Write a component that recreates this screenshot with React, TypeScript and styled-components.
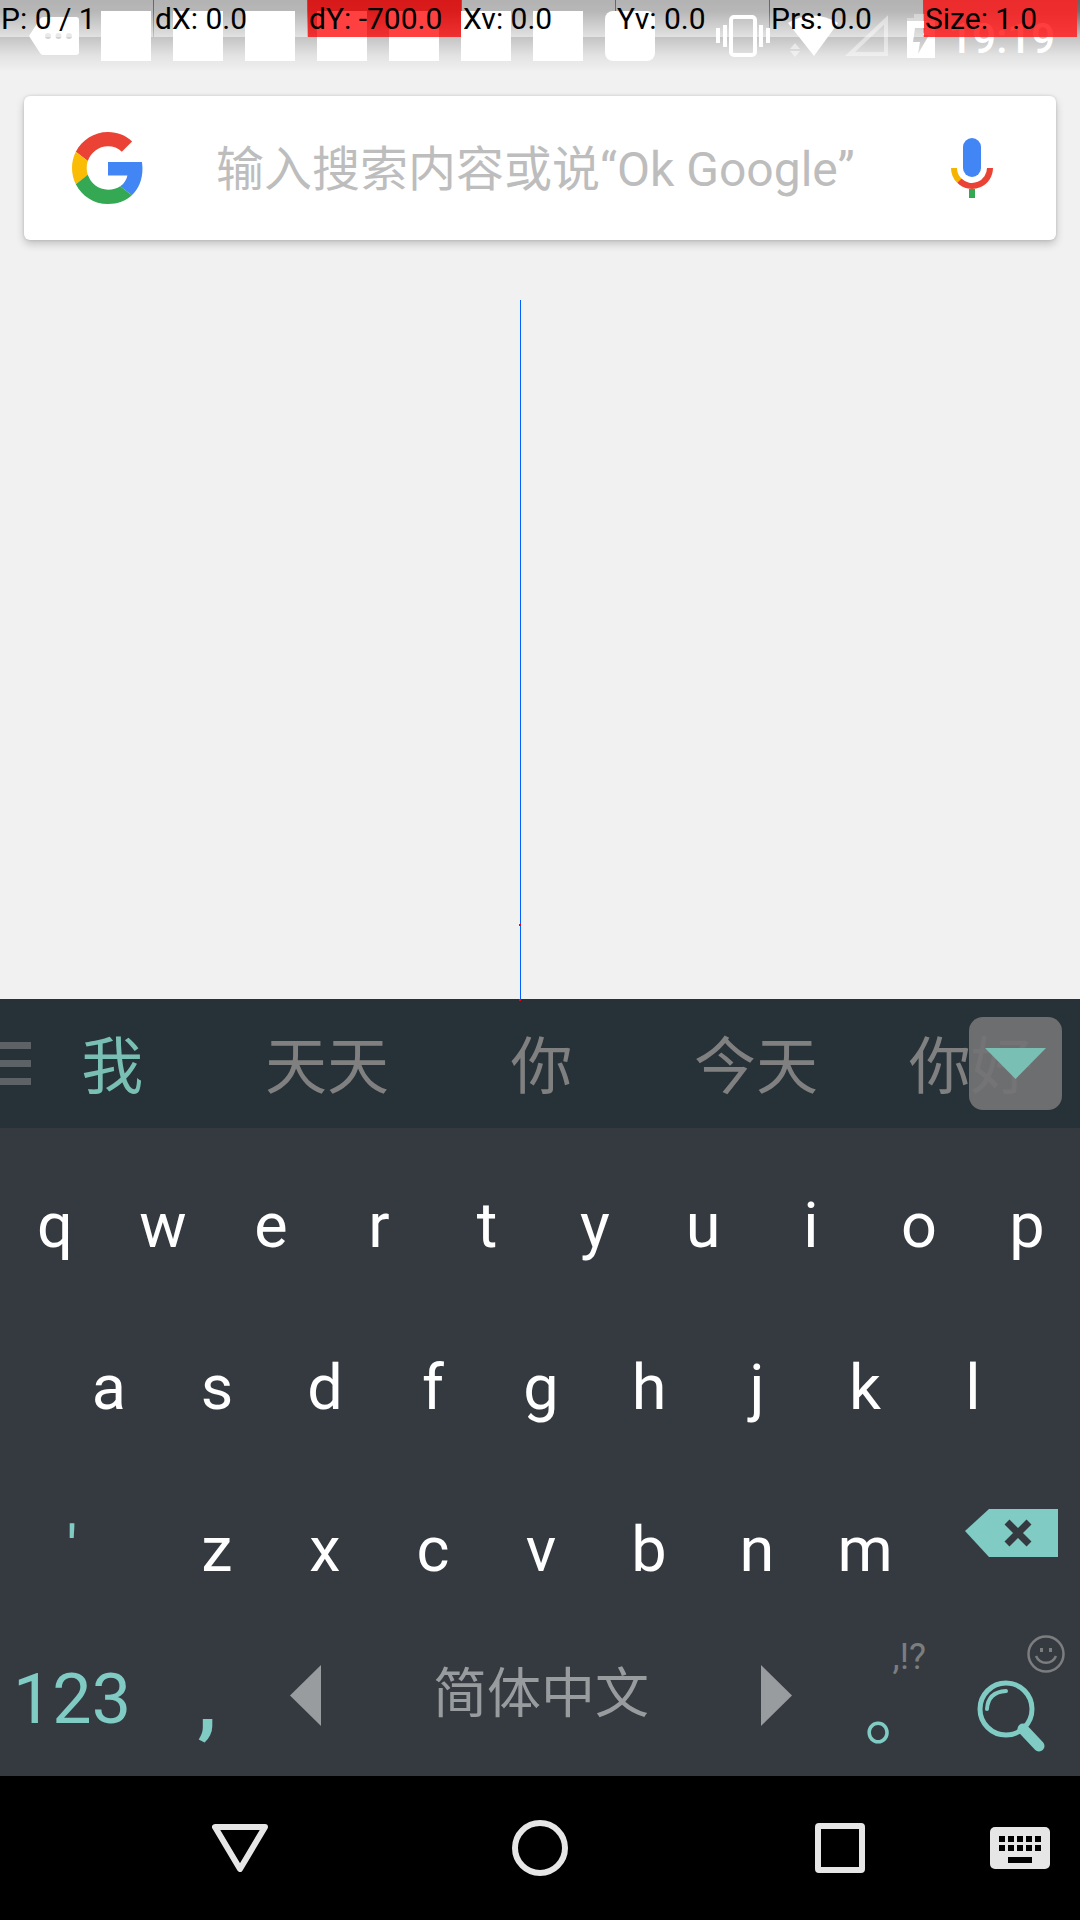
import React from "react";
import styled, { createGlobalStyle } from "styled-components";

const GlobalStyle = createGlobalStyle`
  * { box-sizing: border-box; }
  body { margin: 0; background: #f1f1f1; }
  button, input { font: inherit; color: inherit; border: 0; background: none; padding: 0; margin: 0; outline: none; }
  svg { display: block; }
`;

const Screen = styled.div`
  display: flex;
  flex-direction: column;
  min-height: 100vh;
  overflow: hidden;
  font-family: Roboto, "Noto Sans CJK SC", sans-serif;
`;

const Content = styled.main`
  position: relative;
  flex: 1;
  background: #f1f1f1;
`;

/* ---------- status bar ---------- */

const StatusBar = styled.header`
  position: relative;
  display: flex;
  align-items: center;
  justify-content: space-between;
  height: 72px;
  padding: 0 25px 0 29px;
  background: linear-gradient(
    rgba(0, 0, 0, 0.58) 0,
    rgba(0, 0, 0, 0.54) 11px,
    rgba(0, 0, 0, 0.19) 37px,
    rgba(0, 0, 0, 0.06) 56px,
    rgba(0, 0, 0, 0) 72px
  );
`;

const StatusGroup = styled.div<{ $gap: number }>`
  display: flex;
  align-items: center;
  gap: ${(p) => p.$gap}px;
`;

const Notification = styled.span<{ $round?: boolean }>`
  width: 50px;
  height: 50px;
  border-radius: ${(p) => (p.$round ? 8 : 0)}px;
  background: #fff;
`;

const Clock = styled.time`
  padding-top: 6px;
  color: #fff;
  font-size: 42px;
  font-weight: 500;
  line-height: 50px;
`;

const PointerReadout = styled.div`
  position: absolute;
  inset: 0 0 auto 0;
  display: grid;
  grid-template-columns: repeat(7, 1fr);
  column-gap: 1px;
  padding-right: 3px;
  height: 37px;
`;

const tones = {
  plain: "rgba(255, 255, 255, 0.5)",
  alert: "rgba(255, 0, 0, 0.75)",
  strong: "rgba(255, 36, 36, 0.88)",
};

const Reading = styled.span<{ $tone: keyof typeof tones }>`
  padding-left: 1px;
  background: ${(p) => tones[p.$tone]};
  color: #000;
  font-size: 30px;
  line-height: 37px;
  white-space: nowrap;
`;

const PointerTrail = styled.div`
  position: absolute;
  z-index: 1;
  top: 300px;
  bottom: 0;
  left: 520px;
  width: 1px;
  background: #0060ff;
`;

const TrailPoint = styled.i<{ $up: number }>`
  position: absolute;
  left: -1px;
  bottom: ${(p) => p.$up}px;
  width: 2px;
  height: 2px;
  background: #f00;
`;

/* ---------- search ---------- */

const SearchCard = styled.form`
  display: flex;
  align-items: center;
  height: 144px;
  margin: 24px 24px 0;
  padding: 0 63px 0 48px;
  gap: 72px;
  border-radius: 6px;
  background: #fff;
  box-shadow: 0 4px 8px rgba(0, 0, 0, 0.2), 0 0 3px rgba(0, 0, 0, 0.14);
`;

const SearchInput = styled.input`
  flex: 1;
  min-width: 0;
  height: 72px;
  padding-top: 2px;
  font-size: 48px;
  color: #212121;
  &::placeholder { color: #bdbdbd; opacity: 1; }
`;

/* ---------- keyboard ---------- */

const Keyboard = styled.section`
  background: #343a40;
`;

const Candidates = styled.div`
  position: relative;
  display: grid;
  grid-template-columns: repeat(5, 1fr);
  height: 129px;
  padding: 0 2px 0 5px;
  background: #263238;
`;

const Candidate = styled.button<{ $active?: boolean }>`
  padding-top: 8px;
  color: ${(p) => (p.$active ? "#7abfb4" : "#808080")};
  font-size: 62px;
  line-height: 62px;
`;

const MenuButton = styled.button`
  position: absolute;
  left: 0;
  top: 43px;
  display: grid;
  gap: 11px;
  width: 31px;
`;

const MenuLine = styled.i`
  height: 7px;
  background: #5c6265;
`;

const ExpandButton = styled.button`
  position: absolute;
  top: 18px;
  right: 18px;
  display: grid;
  place-items: center;
  width: 93px;
  height: 93px;
  border-radius: 14px;
  background: rgba(115, 115, 117, 0.92);
`;

const KeyRow = styled.div<{ $columns: string; $inset?: string }>`
  display: grid;
  grid-template-columns: ${(p) => p.$columns};
  height: 162px;
  padding: ${(p) => p.$inset ?? "0"};
`;

const Key = styled.button<{ $drop?: number; $shift?: number }>`
  position: relative;
  display: flex;
  align-items: center;
  justify-content: center;
  padding-top: ${(p) => p.$drop ?? 0}px;
  padding-left: ${(p) => p.$shift ?? 0}px;
  color: #fff;
  font-size: 63px;
  line-height: 74px;
`;

const AccentKey = styled(Key)<{ $size?: number; $bold?: boolean }>`
  color: #80cbc4;
  font-size: ${(p) => p.$size ?? 70}px;
  font-weight: ${(p) => (p.$bold ? 700 : 400)};
`;

const SpaceKey = styled(Key)`
  justify-content: space-between;
  padding: 0 18px 0 20px;
  color: #999c9f;
  font-size: 54px;
`;

const KeyHint = styled.span<{ $top: number; $right: number }>`
  position: absolute;
  top: ${(p) => p.$top}px;
  right: ${(p) => p.$right}px;
  color: #7c7d7f;
  font-size: 36px;
  line-height: 36px;
`;

/* ---------- navigation ---------- */

const NavBar = styled.nav`
  display: grid;
  grid-template-columns: 90px repeat(3, 1fr) 90px;
  height: 144px;
  background: #000;
`;

const NavButton = styled.button<{ $column: number; $start?: boolean }>`
  grid-column: ${(p) => p.$column};
  display: grid;
  align-items: center;
  justify-items: ${(p) => (p.$start ? "start" : "center")};
`;

const readings: { text: string; tone: keyof typeof tones }[] = [
  { text: "P: 0 / 1", tone: "plain" },
  { text: "dX: 0.0", tone: "plain" },
  { text: "dY: -700.0", tone: "alert" },
  { text: "Xv: 0.0", tone: "plain" },
  { text: "Yv: 0.0", tone: "plain" },
  { text: "Prs: 0.0", tone: "plain" },
  { text: "Size: 1.0", tone: "strong" },
];

const candidates = ["我", "天天", "你", "今天", "你好"];

const MoreIcon = () => (
  <svg width="50" height="38" viewBox="0 0 50 38">
    <path fill="#fff" d="M15 0h32q3 0 3 3v32q0 3-3 3H14q-2 0-3-2L0 19 11 2q1-2 4-2z" />
    <g fill="#d2d2d2">
      <circle cx="19" cy="19" r="3" />
      <circle cx="29.500" cy="19" r="3" />
      <circle cx="40" cy="19" r="3" />
    </g>
  </svg>
);

const VibrateIcon = () => (
  <svg width="54" height="42" viewBox="0 0 54 42">
    <rect x="15" y="2" width="24" height="38" rx="3" fill="none" stroke="#fff" strokeWidth="4" />
    <path fill="#fff" d="M0 13h4v15H0zM7 10h4v22H7zM43 10h4v22h-4zM50 13h4v15h-4z" />
  </svg>
);

const NetworkIcon = () => (
  <svg width="100" height="42" viewBox="0 0 100 42">
    <path fill="#fff" d="M0 8Q25-7 50 8L26 41z" />
    <path fill="#fff" fillOpacity=".5" d="M2 34l5-6 5 6zM2 36h10l-5 6z" />
    <path fill="none" stroke="#fff" strokeOpacity=".45" strokeWidth="4" d="M62 39L98 5v34z" />
  </svg>
);

const BatteryIcon = () => (
  <svg width="30" height="44" viewBox="0 0 30 44">
    <path fill="#fff" fillOpacity=".35" d="M8 0h13v4h8v3H1V4h7z" />
    <path fill="#fff" fillRule="evenodd" d="M1 7h28v37H1zM9 14L7 28h7l-2 12 11-19h-6l3-7z" />
  </svg>
);

const GoogleLogo = () => (
  <svg width="72" height="72" viewBox="0 0 48 48">
    <path fill="#ea4335" d="M24 9.5c3.54 0 6.710 1.220 9.210 3.600l6.850-6.850C35.900 2.380 30.470 0 24 0 14.620 0 6.510 5.380 2.560 13.220l7.980 6.190C12.430 13.720 17.740 9.500 24 9.500z" />
    <path fill="#4285f4" d="M46.980 24.550c0-1.570-.150-3.090-.380-4.550H24v9.020h12.940c-.580 2.960-2.260 5.480-4.780 7.180l7.730 6c4.510-4.180 7.090-10.360 7.090-17.650z" />
    <path fill="#fbbc05" d="M10.530 28.590c-.480-1.450-.760-2.990-.760-4.590s.270-3.140.760-4.590l-7.980-6.190C.920 16.460 0 20.120 0 24c0 3.880.920 7.540 2.560 10.780l7.970-6.190z" />
    <path fill="#34a853" d="M24 48c6.480 0 11.930-2.130 15.890-5.810l-7.730-6c-2.150 1.450-4.920 2.300-8.160 2.300-6.260 0-11.570-4.220-13.470-9.910l-7.980 6.190C6.510 42.620 14.620 48 24 48z" />
  </svg>
);

const MicIcon = () => (
  <svg width="42" height="60" viewBox="0 0 42 60">
    <rect x="12" y="0" width="18" height="39" rx="9" fill="#4285f4" />
    <path fill="none" stroke="#f4b400" strokeWidth="6" d="M3 30a18 18 0 0 0 5.300 12.700" />
    <path fill="none" stroke="#ea4335" strokeWidth="6" d="M8.300 42.700A18 18 0 0 0 39 30" />
    <path fill="#34a853" d="M18 51h6v9h-6z" />
  </svg>
);

const BackspaceIcon = () => (
  <svg width="93" height="48" viewBox="0 0 93 48">
    <path fill="#80cbc4" d="M24 0h69v48H24L0 22z" />
    <path stroke="#343a40" strokeWidth="7" d="M42 13l22 22M64 13L42 35" />
  </svg>
);

const MagnifierIcon = () => (
  <svg width="70" height="74" viewBox="0 0 70 74">
    <g fill="none" stroke="#80cbc4" strokeLinecap="round">
      <circle cx="29" cy="29" r="26" strokeWidth="5" />
      <path strokeWidth="4" d="M10 29Q11 12 29 11" />
      <path strokeWidth="11" d="M46 49l16 17" />
    </g>
  </svg>
);

const SmileyIcon = () => (
  <svg width="38" height="38" viewBox="0 0 38 38">
    <g fill="none" stroke="#7c7d7f">
      <circle cx="19" cy="19" r="17.500" strokeWidth="2.500" />
      <path strokeWidth="2.500" d="M9 21c4 9 16 9 20 0" />
    </g>
    <path fill="#7c7d7f" d="M13 13h3v4h-3zM22 13h3v4h-3z" />
  </svg>
);

const LetterKeys = ({ letters }: { letters: string }) => (
  <>
    {letters.split("").map((letter) => (
      <Key key={letter} type="button" $drop={34} $shift={2}>{letter}</Key>
    ))}
  </>
);

const MiddleLetters = styled.div`
  display: grid;
  grid-template-columns: repeat(7, 1fr);
  padding: 0 18px;
`;

export default function App() {
  return (
    <Screen>
      <GlobalStyle />
      <Content>
        <StatusBar>
          <StatusGroup $gap={22}>
            <MoreIcon />
            {[1, 2, 3, 4, 5, 6, 7].map((n) => <Notification key={n} />)}
            <Notification $round />
          </StatusGroup>
          <StatusGroup $gap={12}>
            <StatusGroup $gap={18}>
              <VibrateIcon />
              <NetworkIcon />
              <BatteryIcon />
            </StatusGroup>
            <Clock>19:19</Clock>
          </StatusGroup>
          <PointerReadout>
            {readings.map((r) => <Reading key={r.text} $tone={r.tone}>{r.text}</Reading>)}
          </PointerReadout>
        </StatusBar>
        <SearchCard onSubmit={(e) => e.preventDefault()}>
          <GoogleLogo />
          <SearchInput type="text" aria-label="搜索" placeholder="输入搜索内容或说“Ok Google”" />
          <button type="button" aria-label="语音搜索"><MicIcon /></button>
        </SearchCard>
        <PointerTrail>
          <TrailPoint $up={73} />
          <TrailPoint $up={-2} />
        </PointerTrail>
      </Content>

      <Keyboard>
        <Candidates>
          {candidates.map((word, i) => (
            <Candidate key={word} type="button" $active={i === 0}>{word}</Candidate>
          ))}
          <MenuButton type="button" aria-label="菜单">
            <MenuLine /><MenuLine /><MenuLine />
          </MenuButton>
          <ExpandButton type="button" aria-label="更多候选词">
            <svg width="61" height="32" viewBox="0 0 61 32"><path fill="#7abfb4" d="M0 0h61L30.500 31z" /></svg>
          </ExpandButton>
        </Candidates>
        <KeyRow $columns="repeat(10, 1fr)"><LetterKeys letters="qwertyuiop" /></KeyRow>
        <KeyRow $columns="repeat(9, 1fr)" $inset="0 54px"><LetterKeys letters="asdfghjkl" /></KeyRow>
        <KeyRow $columns="144px 1fr 144px">
          <AccentKey type="button" $size={63} $drop={34}>'</AccentKey>
          <MiddleLetters><LetterKeys letters="zxcvbnm" /></MiddleLetters>
          <Key type="button" aria-label="退格" $shift={6}><BackspaceIcon /></Key>
        </KeyRow>
        <KeyRow $columns="144px 126px 1fr 126px 144px">
          <AccentKey type="button" $drop={8}>123</AccentKey>
          <AccentKey type="button" $drop={12} $size={80} $bold>,</AccentKey>
          <SpaceKey type="button">
            <svg width="31" height="61" viewBox="0 0 31 61"><path fill="#999c9f" d="M31 0v61L0 30.500z" /></svg>
            简体中文
            <svg width="31" height="61" viewBox="0 0 31 61"><path fill="#999c9f" d="M0 0v61l31-30.500z" /></svg>
          </SpaceKey>
          <AccentKey type="button" $drop={40} $shift={53}>
            。
            <KeyHint $top={25} $right={10}>,!?</KeyHint>
          </AccentKey>
          <Key type="button" aria-label="搜索" $drop={44} $shift={8}>
            <MagnifierIcon />
            <KeyHint $top={21} $right={15}><SmileyIcon /></KeyHint>
          </Key>
        </KeyRow>
      </Keyboard>

      <NavBar>
        <NavButton type="button" aria-label="返回" $column={2}>
          <svg width="56" height="48" viewBox="0 0 56 48"><path fill="none" stroke="#e6e6e6" strokeWidth="6" strokeLinejoin="round" d="M3 3h50L28 45z" /></svg>
        </NavButton>
        <NavButton type="button" aria-label="主屏幕" $column={3}>
          <svg width="56" height="56" viewBox="0 0 56 56"><circle cx="28" cy="28" r="25" fill="none" stroke="#e6e6e6" strokeWidth="6" /></svg>
        </NavButton>
        <NavButton type="button" aria-label="最近任务" $column={4}>
          <svg width="50" height="50" viewBox="0 0 50 50"><path fill="#e6e6e6" fillRule="evenodd" d="M4 0h42q4 0 4 4v42q0 4-4 4H4q-4 0-4-4V4q0-4 4-4zM6 6v38h38V6z" /></svg>
        </NavButton>
        <NavButton type="button" aria-label="切换键盘" $column={5} $start>
          <svg width="60" height="42" viewBox="0 0 60 42">
            <rect width="60" height="42" rx="5" fill="#e6e6e6" />
            <path d="M9 9h6v6H9zM18 9h6v6h-6zM27 9h6v6h-6zM36 9h6v6h-6zM45 9h6v6h-6zM9 18h6v6H9zM18 18h6v6h-6zM27 18h6v6h-6zM36 18h6v6h-6zM45 18h6v6h-6zM18 30h24v6H18z" />
          </svg>
        </NavButton>
      </NavBar>
    </Screen>
  );
}
